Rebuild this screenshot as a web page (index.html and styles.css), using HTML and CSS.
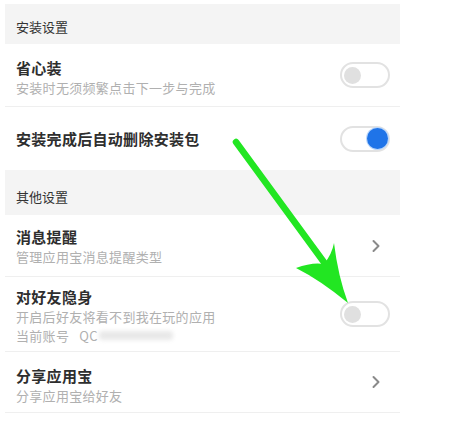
FILE: index.html
```html
<!DOCTYPE html>
<html lang="zh">
<head>
<meta charset="utf-8">
<link rel="stylesheet" href="styles.css">
</head>
<body>
<div class="screen">
  <div class="section-head first">安装设置</div>
  <div class="row r1 divided">
    <div class="texts">
      <div class="title">省心装</div>
      <div class="sub">安装时无须频繁点击下一步与完成</div>
    </div>
    <div class="toggle"><span class="knob"></span></div>
  </div>
  <div class="row r2">
    <div class="texts">
      <div class="title">安装完成后自动删除安装包</div>
    </div>
    <div class="toggle on"><span class="knob"></span></div>
  </div>
  <div class="section-head">其他设置</div>
  <div class="row r3 divided">
    <div class="texts">
      <div class="title">消息提醒</div>
      <div class="sub">管理应用宝消息提醒类型</div>
    </div>
    <svg class="chev" width="10" height="14" viewBox="0 0 10 14"><path d="M2.5 2 L7.5 7 L2.5 12" fill="none" stroke="#8a8a8a" stroke-width="2" stroke-linecap="round" stroke-linejoin="round"/></svg>
  </div>
  <div class="row r4 divided">
    <div class="texts">
      <div class="title">对好友隐身</div>
      <div class="sub">开启后好友将看不到我在玩的应用</div>
      <div class="sub acct">当前账号<span class="qq">QC</span><span class="blur"></span></div>
    </div>
    <div class="toggle"><span class="knob"></span></div>
  </div>
  <div class="row r5 divided">
    <div class="texts">
      <div class="title">分享应用宝</div>
      <div class="sub">分享应用宝给好友</div>
    </div>
    <svg class="chev" width="10" height="14" viewBox="0 0 10 14"><path d="M2.5 2 L7.5 7 L2.5 12" fill="none" stroke="#8a8a8a" stroke-width="2" stroke-linecap="round" stroke-linejoin="round"/></svg>
  </div>
</div>
<svg class="arrow" width="450" height="424" viewBox="0 0 450 424">
  <line x1="236" y1="142" x2="326" y2="265" stroke="#22e622" stroke-width="6.5" stroke-linecap="round"/>
  <path d="M348 303 Q320 280 296 268 Q312 262 324 264 Q332 254 334 243 Q338 276 348 303 Z" fill="#22e622"/>
</svg>
</body>
</html>
```
FILE: styles.css
```css
html, body {
  margin: 0;
  padding: 0;
  background: #ffffff;
}
body {
  width: 450px;
  height: 424px;
  overflow: hidden;
  position: relative;
  font-family: "Noto Sans CJK SC", "Noto Sans", sans-serif;
}
.screen {
  width: 395px;
  margin-left: 5px;
  padding-top: 4px;
}
.section-head {
  background: #f4f4f4;
  height: 45px;
  box-sizing: border-box;
  padding: 20px 0 0 11px;
  font-size: 13px;
  line-height: 14px;
  color: #333333;
}
.section-head.first {
  height: 40px;
  padding-top: 16px;
}
.row {
  display: flex;
  align-items: center;
  justify-content: space-between;
  box-sizing: border-box;
  padding: 0 10px 0 11px;
}
.row.divided {
  border-bottom: 1px solid #efefef;
}
.texts {
  align-self: flex-start;
}
.r1 { height: 63px; }
.r1 .texts { padding-top: 14px; }
.r2 { height: 63px; }
.r2 .texts { align-self: center; }
.r3 { height: 62px; }
.r3 .texts { padding-top: 12px; }
.r4 { height: 75px; }
.r4 .texts { padding-top: 10px; }
.r5 { height: 61px; }
.r5 .texts { padding-top: 14px; }
.title {
  font-size: 15px;
  line-height: 20px;
  font-weight: 700;
  color: #2e2e2e;
  letter-spacing: 0.3px;
}
.sub {
  font-size: 13px;
  line-height: 19px;
  color: #b0b0b0;
  letter-spacing: 0.3px;
}
.acct {
  display: flex;
  align-items: center;
}
.qq {
  margin-left: 10px;
}
.blur {
  display: inline-block;
  width: 74px;
  height: 9px;
  margin-left: 1px;
  background: #e8e8e8;
  border-radius: 4px;
  filter: blur(2px);
}
.toggle {
  width: 50px;
  height: 26px;
  box-sizing: border-box;
  border: 2px solid #e2e2e2;
  border-radius: 13px;
  background: #ffffff;
  display: flex;
  align-items: center;
  padding: 0 2px;
}
.knob {
  width: 17px;
  height: 17px;
  border-radius: 50%;
  background: #e0e0e0;
}
.toggle.on {
  justify-content: flex-end;
  padding: 0 0;
}
.toggle.on .knob {
  width: 21px;
  height: 21px;
  background: #1f74e8;
  box-shadow: 0 0 0 1px #b9d6fb;
}
.chev {
  margin-right: 9px;
}
.arrow {
  position: absolute;
  left: 0;
  top: 0;
  pointer-events: none;
}
```
